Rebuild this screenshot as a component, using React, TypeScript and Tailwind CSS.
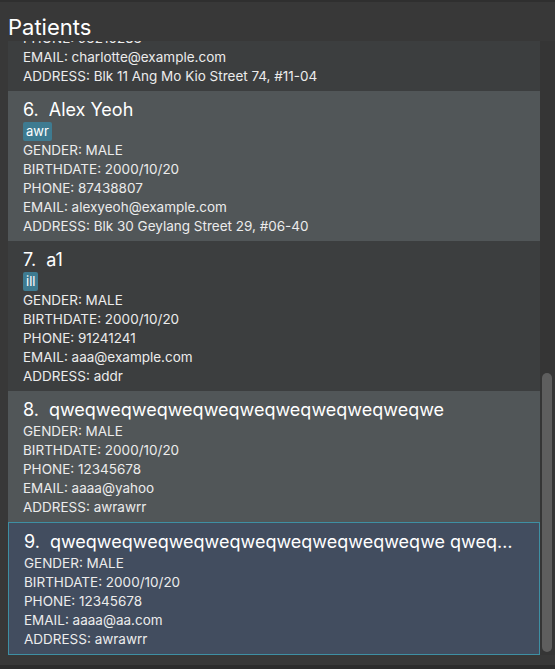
import React from 'react';

type Patient = {
  id: number;
  name: string;
  tags: string[];
  gender: string;
  birthdate: string;
  phone: string;
  email: string;
  address: string;
};

const patients: Patient[] = [
  {
    id: 5,
    name: 'Charlotte Oliveiro',
    tags: [],
    gender: 'FEMALE',
    birthdate: '2000/10/20',
    phone: '93210283',
    email: 'charlotte@example.com',
    address: 'Blk 11 Ang Mo Kio Street 74, #11-04',
  },
  {
    id: 6,
    name: 'Alex Yeoh',
    tags: ['awr'],
    gender: 'MALE',
    birthdate: '2000/10/20',
    phone: '87438807',
    email: 'alexyeoh@example.com',
    address: 'Blk 30 Geylang Street 29, #06-40',
  },
  {
    id: 7,
    name: 'a1',
    tags: ['ill'],
    gender: 'MALE',
    birthdate: '2000/10/20',
    phone: '91241241',
    email: 'aaa@example.com',
    address: 'addr',
  },
  {
    id: 8,
    name: 'qweqweqweqweqweqweqweqweqweqweqwe',
    tags: [],
    gender: 'MALE',
    birthdate: '2000/10/20',
    phone: '12345678',
    email: 'aaaa@yahoo',
    address: 'awrawrr',
  },
  {
    id: 9,
    name: 'qweqweqweqweqweqweqweqweqweqweqwe qweqweqweqweqweqwe',
    tags: [],
    gender: 'MALE',
    birthdate: '2000/10/20',
    phone: '12345678',
    email: 'aaaa@aa.com',
    address: 'awrawrr',
  },
];

function PatientCard({ p, index, selected }: { p: Patient; index: number; selected: boolean }) {
  const bg = selected
    ? 'bg-[#424d5f] border border-[#3e8fa3] px-[15px] pt-[5px] pb-[5px]'
    : index % 2 === 0
      ? 'bg-[#3c3e3f] px-[15px] pt-[5px] pb-[5px]'
      : 'bg-[#515658] px-[15px] pt-[5px] pb-[5px]';
  return (
    <div className={`${bg} shrink-0`}>
      <div className="h-[26px] flex items-center text-[18px] text-white whitespace-nowrap overflow-hidden">
        <span className="shrink-0">{p.id}.</span>
        <span className="ml-[10px] truncate">{p.name}</span>
      </div>
      {p.tags.length > 0 && (
        <div className="flex gap-1 h-[19px]">
          {p.tags.map(t => (
            <span key={t} className="bg-[#3e7b91] rounded-[2px] px-[3px] text-[13px] leading-[19px] text-white">
              {t}
            </span>
          ))}
        </div>
      )}
      <div className="text-[13.5px] leading-[19px] text-[#ececec]">
        <div>GENDER: {p.gender}</div>
        <div>BIRTHDATE: {p.birthdate}</div>
        <div>PHONE: {p.phone}</div>
        <div>EMAIL: {p.email}</div>
        <div>ADDRESS: {p.address}</div>
      </div>
    </div>
  );
}

export default function App() {
  return (
    <div
      className="w-[555px] h-[669px] bg-[#383838] flex flex-col border-t-2 border-[#2f2f2f] overflow-hidden"
      style={{ fontFamily: 'Inter, "Open Sans", sans-serif' }}
    >
      <div className="h-[39px] pl-2 flex items-end text-[22px] leading-[28px] text-white">Patients</div>
      <div className="h-[614px] flex">
        <div className="w-[532px] ml-2 flex flex-col justify-end overflow-hidden">
          {patients.map((p, i) => (
            <PatientCard key={p.id} p={p} index={i} selected={p.id === 9} />
          ))}
        </div>
        <div className="flex-1 bg-[#353535] pl-[2px] pr-[3px]">
          <div className="mt-[332px] h-[279px] rounded-[5px] bg-[#5e5e5e]" />
        </div>
      </div>
      <div className="flex-1 border-b-4 border-[#2c2c2c]" />
    </div>
  );
}
